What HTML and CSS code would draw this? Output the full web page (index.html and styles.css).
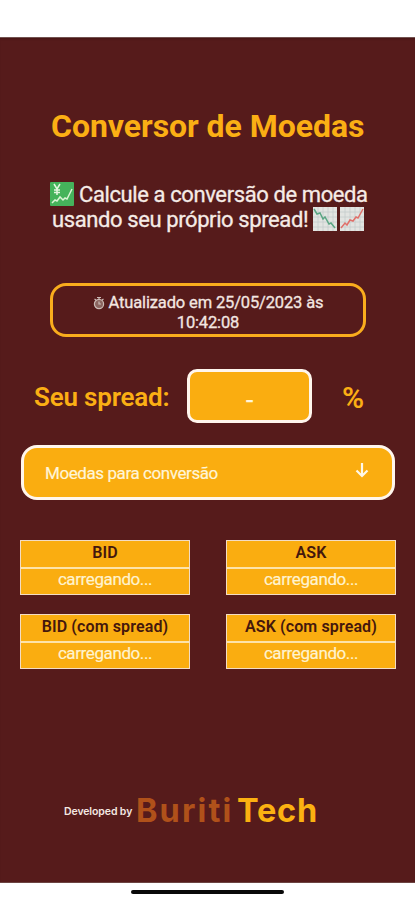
FILE: index.html
```html
<!DOCTYPE html>
<html lang="pt-BR">
<head>
<meta charset="utf-8">
<title>Conversor de Moedas</title>
<link rel="stylesheet" href="styles.css">
</head>
<body>
<div class="status"></div>
<main class="app">
  <h1 class="title">Conversor de Moedas</h1>
  <p class="intro">
    <span class="line first"><svg class="emoji yen" viewBox="0 0 24 24"><rect width="24" height="24" rx="1" fill="#45b35b"/><path d="M4 2l3 5 3-5M7 7v6M4 8h6M4 10.500h6" fill="none" stroke="#e4f5df" stroke-width="1.500"/><path d="M2 21l3-3 2 1 3-4 3 3 2-2 2 1 5-10" fill="none" stroke="#d9f3d4" stroke-width="1.500"/></svg> Calcule a conversão de moeda</span>
    <span class="line second">usando seu próprio spread! <svg class="emoji" viewBox="0 0 24 24"><rect width="24" height="24" fill="#e2e4e1"/><path d="M0 5h24M0 10h24M0 15h24M0 20h24M5 0v24M10 0v24M15 0v24M20 0v24" stroke="#c5cccb" stroke-width=".8"/><path d="M1 2l3 5 3-1 3 6 2-2 4 7 2-1 4 5" fill="none" stroke="#5aa583" stroke-width="1.500"/></svg><svg class="emoji up" viewBox="0 0 24 24"><rect width="24" height="24" fill="#e2e4e1"/><path d="M0 5h24M0 10h24M0 15h24M0 20h24M5 0v24M10 0v24M15 0v24M20 0v24" stroke="#c5cccb" stroke-width=".8"/><path d="M1 21l4-5 2 2 3-5 3 1 3-4 2 1 5-9" fill="none" stroke="#e0706a" stroke-width="1.500"/></svg></span>
  </p>
  <div class="updated">
    <span class="line l1"><svg class="watch" viewBox="0 0 12 14"><circle cx="6" cy="8" r="4.600" fill="#8b6560" stroke="#cbbab5" stroke-width="1.200"/><path d="M4 1.500h4M6 1.500v2M1.500 3l1.500 1M10.500 3L9 4M6 5.500V8h2" fill="none" stroke="#cbbab5" stroke-width="1.200"/></svg> Atualizado em 25/05/2023 às</span>
    <span class="line l2">10:42:08</span>
  </div>
  <div class="spread">
    <span class="label">Seu spread:</span>
    <div class="input">-</div>
    <span class="percent">%</span>
  </div>
  <div class="select">
    <span class="choice">Moedas para conversão</span>
    <svg class="arrow" viewBox="0 0 14 16"><path d="M7 1v13M1.500 8.500L7 14l5.500-5.500" fill="none" stroke="#fff8e8" stroke-width="2.200"/></svg>
  </div>
  <div class="rates">
    <div class="rate"><div class="name">BID</div><div class="value">carregando...</div></div>
    <div class="rate"><div class="name">ASK</div><div class="value">carregando...</div></div>
    <div class="rate"><div class="name">BID (com spread)</div><div class="value">carregando...</div></div>
    <div class="rate"><div class="name">ASK (com spread)</div><div class="value">carregando...</div></div>
  </div>
  <footer class="footer"><span class="dev">Developed by</span><span class="buriti">Buriti</span><span class="tech">Tech</span></footer>
</main>
<div class="nav"><div class="handle"></div></div>
</body>
</html>
```
FILE: styles.css
```css
* { box-sizing: border-box; }
body { margin: 0; width: 415px; height: 900px; overflow: hidden; background: #fff; font-family: Roboto, "Liberation Sans", sans-serif; }
.status { height: 37px; }
.app { height: 846px; background: #561b1b; border-top: 1px solid #735250; border-bottom: 1px solid #6d4442; display: flex; flex-direction: column; box-shadow: inset 0 2px 2px -1px #461314; }
.title { margin: 69px 0 0; padding-left: 51px; font-size: 32px; line-height: 38px; font-weight: 700; color: #fbaf14; white-space: nowrap; letter-spacing: -.05px; }
.intro { margin: 37px 0 0; font-size: 22px; line-height: 25px; color: #f5ebe6; white-space: nowrap; letter-spacing: -.4px; -webkit-text-stroke: .3px; }
.line { display: block; }
.first { padding-left: 50px; }
.second { padding-left: 52px; }
.emoji { width: 24px; height: 24px; vertical-align: -4px; }
.up { margin-left: 3px; }
.updated { width: 316px; height: 54px; margin: 51px 0 0 50px; padding-top: 7px; border: 3px solid #f9ad1d; border-radius: 16px; font-size: 16.500px; line-height: 19.500px; color: #f3e6e1; text-align: center; white-space: nowrap; letter-spacing: -.15px; -webkit-text-stroke: .3px; }
.watch { width: 12px; height: 14px; vertical-align: -2px; }
.spread { height: 54px; margin-top: 32px; padding-left: 34px; display: flex; align-items: center; color: #fbaf14; }
.label { width: 153px; padding-top: 2px; font-size: 26px; font-weight: 600; white-space: nowrap; letter-spacing: -.2px; }
.input { width: 125px; height: 54px; border: 3px solid #fff6ed; border-radius: 10px; background: #faad10; color: #fff6dc; font-size: 26px; line-height: 56px; text-align: center; -webkit-text-stroke: .4px; }
.percent { margin-left: 30px; padding-top: 3px; font-size: 30px; font-weight: 600; }
.select { width: 374px; height: 55px; margin: 22px 0 0 21px; padding: 0 23px 0 21px; border: 3px solid #fff6ed; border-radius: 16px; background: #faad10; display: flex; align-items: center; justify-content: space-between; color: #fff5d8; }
.choice { font-size: 17px; letter-spacing: -.42px; -webkit-text-stroke: .2px; }
.arrow { width: 14px; height: 16px; margin-top: -6px; }
.rates { margin: 40px 19px 0 20px; display: grid; grid-template-columns: 170px 170px; justify-content: space-between; row-gap: 18.500px; }
.rate { height: 55px; border: 1px solid #f3dcc4; background: #faad10; text-align: center; white-space: nowrap; }
.name { height: 28px; border-bottom: 2px solid #fde3a8; font-size: 16px; line-height: 24px; font-weight: 600; color: #44170d; letter-spacing: .12px; }
.value { font-size: 17px; line-height: 21px; color: #fff3cf; letter-spacing: -.4px; -webkit-text-stroke: .2px; }
.footer { margin-top: 122.500px; height: 40px; display: flex; align-items: center; padding-left: 64px; white-space: nowrap; font-family: Inter, sans-serif; }
.dev { width: 72px; font-size: 10.500px; font-weight: 600; color: #f4e7e2; letter-spacing: -.1px; }
.buriti, .tech { font-size: 32.500px; line-height: 40px; font-weight: 700; }
.buriti { color: #b0511a; letter-spacing: 2.100px; width: 101px; }
.tech { color: #fbb111; letter-spacing: .8px; }
.nav { height: 17px; padding-top: 7px; }
.handle { width: 153px; height: 4px; margin-left: 131px; border-radius: 2px; background: #090909; }
```
